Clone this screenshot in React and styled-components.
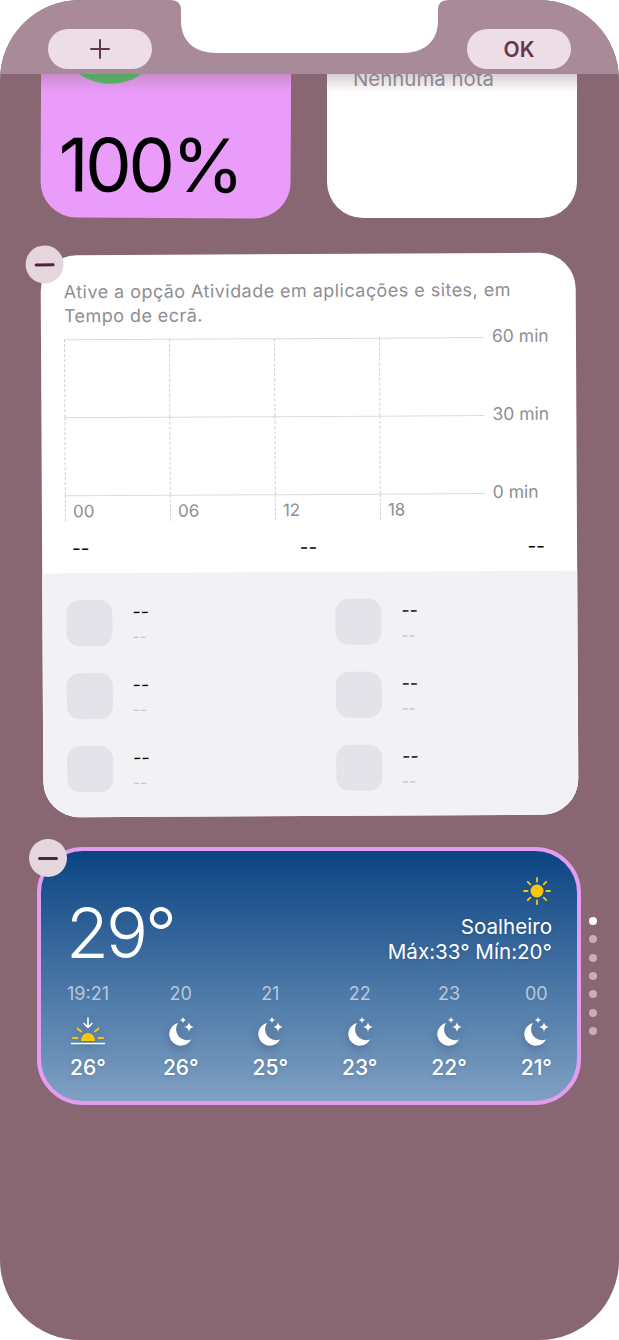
import styled, { createGlobalStyle } from "styled-components"

const GlobalStyle = createGlobalStyle`
    html, body {
        margin: 0;
        padding: 0;
        background: #fff;
    }
    * {
        box-sizing: border-box;
    }
`

const Screen = styled.div`
    position: relative;
    width: 619px;
    height: 1340px;
    display: flex;
    flex-direction: column;
    overflow: hidden;
    border-radius: 80px;
    background-color: #886672;
    font-family: Inter, "Noto Sans", "Liberation Sans", sans-serif;
`

const Header = styled.div`
    position: relative;
    z-index: 2;
    flex: 0 0 74px;
    display: flex;
    justify-content: space-between;
    padding: 29px 48px 0 48px;
    background-color: #a98a99;
`

const Notch = styled.svg`
    position: absolute;
    top: 0;
    left: 165px;
`

const HeaderButton = styled.div`
    width: 104px;
    height: 40px;
    display: flex;
    align-items: center;
    justify-content: center;
    border-radius: 20px;
    background-color: #ecdde6;
    color: #66364e;
    font-size: 21px;
    font-weight: 600;
`

const Content = styled.div`
    position: relative;
    flex: 1;
    display: flex;
    flex-direction: column;
    overflow: hidden;

    &::before {
        content: "";
        position: absolute;
        z-index: 1;
        top: 0;
        left: 0;
        right: 0;
        height: 18px;
        background: linear-gradient(rgba(136, 102, 114, 0.32), rgba(136, 102, 114, 0));
    }
`

const TopRow = styled.div`
    display: flex;
    gap: 36px;
    margin-top: -106px;
    padding-left: 41px;
`

const BatteryWidget = styled.div`
    width: 250px;
    height: 250px;
    display: flex;
    flex-direction: column;
    padding: 6px 0 0 14px;
    border-radius: 36px;
    background-color: #e99cf9;
    transform: rotate(0.3deg);
`

const BatteryRing = styled.div`
    width: 110px;
    height: 110px;
    border-radius: 50%;
    background-color: #45c25f;
`

const BatteryLevel = styled.div`
    margin: 36px 0 0 4px;
    font-size: 74px;
    line-height: 90px;
    letter-spacing: -3.5px;
    color: #000;
`

const NotesWidget = styled.div`
    width: 250px;
    height: 250px;
    padding: 99px 26px 0 26px;
    border-radius: 36px;
    background-color: #fff;
    color: #8e8e93;
    font-size: 20.4px;
    line-height: 24px;
`

const ScreenTimeWidget = styled.div`
    position: relative;
    width: 535px;
    height: 562px;
    margin: 36px 0 0 42px;
    display: flex;
    flex-direction: column;
    border-radius: 36px;
    background-color: #fff;
    transform: rotate(-0.3deg);
`

const MinusButton = styled.div`
    position: absolute;
    top: ${(props) => props.$top}px;
    left: ${(props) => props.$left}px;
    z-index: 1;
    width: 38px;
    height: 38px;
    display: flex;
    align-items: center;
    justify-content: center;
    border-radius: 50%;
    background-color: #e5d6de;

    &::after {
        content: "";
        width: 20px;
        height: 3px;
        border-radius: 2px;
        background-color: #552239;
    }
`

const UpperPanel = styled.div`
    height: 318px;
    padding: 25px 26px 0 23px;
`

const Message = styled.div`
    color: #8e8e93;
    font-size: 18px;
    line-height: 24px;
    letter-spacing: 0.45px;
    white-space: nowrap;
`

const ChartRow = styled.div`
    display: flex;
    margin-top: 11px;
`

const Plot = styled.div`
    width: 420px;
    display: grid;
    grid-template-columns: repeat(4, 105px);
    grid-template-rows: 78px 78px 26px;
`

const PlotCell = styled.div`
    border-top: 1px solid #dcdcde;
    border-left: 1px dashed #cfcfd2;
    padding: 5px 0 0 7px;
    color: #8e8e93;
    font-size: 17px;
    line-height: 20px;
`

const AxisLabels = styled.div`
    margin: -11px 0 0 8px;
    display: flex;
    flex-direction: column;
    gap: 58px;
`

const AxisLabel = styled.div`
    height: 20px;
    color: #8e8e93;
    font-size: 17.5px;
    line-height: 20px;
    white-space: nowrap;
`

const Totals = styled.div`
    display: flex;
    justify-content: space-between;
    margin: 16px 6px 0 7px;
    color: #000;
    font-size: 19px;
    line-height: 24px;
`

const LowerPanel = styled.div`
    flex: 1;
    display: grid;
    grid-template-columns: 269px 1fr;
    grid-auto-rows: 46px;
    row-gap: 27px;
    padding: 27px 26px 0 24px;
    border-radius: 0 0 36px 36px;
    background-color: #f2f1f6;
`

const AppRow = styled.div`
    display: flex;
    align-items: center;
    gap: 20px;
`

const AppIcon = styled.div`
    width: 46px;
    height: 46px;
    border-radius: 13px;
    background-color: #e4e3e9;
`

const AppText = styled.div`
    display: flex;
    flex-direction: column;
    gap: 6px;
    padding-top: 1px;
`

const AppName = styled.div`
    color: #000;
    font-size: 18px;
    line-height: 20px;
`

const AppTime = styled.div`
    color: #c7c7cc;
    font-size: 15px;
    line-height: 18px;
`

const WeatherRow = styled.div`
    display: flex;
    align-items: center;
    gap: 8px;
    margin: 31px 0 0 37px;
`

const WeatherWidget = styled.div`
    position: relative;
    width: 544px;
    height: 258px;
    display: flex;
    flex-direction: column;
    border: 4px solid #e49cf0;
    border-radius: 46px;
    background: linear-gradient(#0b4483, #7fa0c3);
    color: #fff;
`

const WeatherTop = styled.div`
    display: flex;
    justify-content: space-between;
    padding: 25px 25px 0 25px;
`

const CurrentTemp = styled.div`
    margin: 24px 0 -2px 0;
    font-size: 70px;
    font-weight: 300;
    line-height: 66px;
    letter-spacing: -3px;
`

const Summary = styled.div`
    display: flex;
    flex-direction: column;
    align-items: flex-end;
`

const SunIcon = styled.svg`
    margin: 0 0 8px 0;
`

const SummaryLine = styled.div`
    font-size: 20.6px;
    line-height: 25px;
    text-shadow: 0 1px 4px rgba(0, 0, 0, 0.15);
`

const Forecast = styled.div`
    display: flex;
    justify-content: space-between;
    margin-top: 20px;
    padding: 0 25px 0 26px;
`

const Hour = styled.div`
    display: flex;
    flex-direction: column;
    align-items: center;
`

const HourLabel = styled.div`
    color: rgba(255, 255, 255, 0.6);
    font-size: 18px;
    line-height: 20px;
    margin-bottom: 13px;
`

const HourIcon = styled.svg`
    filter: drop-shadow(0 3px 4px rgba(0, 0, 0, 0.2));
`

const HourTemp = styled.div`
    margin-top: 11px;
    font-size: 21px;
    font-weight: 500;
    line-height: 20px;
    text-shadow: 0 1px 4px rgba(0, 0, 0, 0.15);
`

const PageDots = styled.div`
    display: flex;
    flex-direction: column;
    gap: 10.4px;
`

const PageDot = styled.div`
    width: 8px;
    height: 8px;
    border-radius: 50%;
    background-color: ${(props) => (props.$active ? "#fff" : "#c4aeb8")};
`

const Moon = () => (
    <HourIcon width="30" height="30" viewBox="0 0 30 30">
        <path d="M12 6A11.5 11.5 0 1 0 25 22.5A11 11 0 0 1 12 6Z" fill="#fff" />
        <path d="M23 5Q23.5 9.5 28 10Q23.5 10.5 23 15Q22.5 10.5 18 10Q22.5 9.5 23 5Z" fill="#fff" />
        <path d="M17 0Q17.3 2.7 20 3Q17.3 3.3 17 6Q16.7 3.3 14 3Q16.7 2.7 17 0Z" fill="#fff" />
    </HourIcon>
)

const Sunset = () => (
    <HourIcon width="34" height="30" viewBox="0 0 34 30">
        <path d="M10 24A7 8 0 0 1 24 24Z" fill="#fcc70a" />
        <path
            d="M2 21H6.5M27.5 21H32M6.5 11.5L10 14.5M27.5 11.5L24 14.5"
            stroke="#fcc70a"
            strokeWidth="1.8"
            strokeLinecap="round"
            fill="none"
        />
        <path d="M0 26.5H34" stroke="#fff" strokeWidth="1.6" fill="none" />
        <path
            d="M17 1V10M13 6.5L17 10.5L21 6.5"
            stroke="#fff"
            strokeWidth="1.6"
            strokeLinecap="round"
            strokeLinejoin="round"
            fill="none"
        />
    </HourIcon>
)

const hours = [
    { label: "19:21", temp: "26°", sunset: true },
    { label: "20", temp: "26°" },
    { label: "21", temp: "25°" },
    { label: "22", temp: "23°" },
    { label: "23", temp: "22°" },
    { label: "00", temp: "21°" },
]

const ticks = ["00", "06", "12", "18"]

const App = () => {
    return (
        <Screen>
            <GlobalStyle />
            <Header>
                <Notch width="290" height="54" viewBox="0 0 290 54">
                    <path
                        d="M6 0Q16 0 16 10V20C16 42 30 53 52 53H237C259 53 273 42 273 20V10Q273 0 283 0Z"
                        fill="#fff"
                    />
                </Notch>
                <HeaderButton>
                    <svg width="20" height="20" viewBox="0 0 20 20">
                        <path d="M10 1V19M1 10H19" stroke="#66364e" strokeWidth="2" strokeLinecap="round" />
                    </svg>
                </HeaderButton>
                <HeaderButton>OK</HeaderButton>
            </Header>
            <Content>
                <TopRow>
                    <BatteryWidget>
                        <BatteryRing />
                        <BatteryLevel>100%</BatteryLevel>
                    </BatteryWidget>
                    <NotesWidget>Nenhuma nota</NotesWidget>
                </TopRow>

                <ScreenTimeWidget>
                    <MinusButton $top={-10} $left={-15} />
                    <UpperPanel>
                        <Message>
                            Ative a opção Atividade em aplicações e sites, em
                            <br />
                            Tempo de ecrã.
                        </Message>
                        <ChartRow>
                            <Plot>
                                {ticks.map((t) => <PlotCell key={"a" + t} />)}
                                {ticks.map((t) => <PlotCell key={"b" + t} />)}
                                {ticks.map((t) => <PlotCell key={t}>{t}</PlotCell>)}
                            </Plot>
                            <AxisLabels>
                                <AxisLabel>60 min</AxisLabel>
                                <AxisLabel>30 min</AxisLabel>
                                <AxisLabel>0 min</AxisLabel>
                            </AxisLabels>
                        </ChartRow>
                        <Totals>
                            <span>--</span>
                            <span>--</span>
                            <span>--</span>
                        </Totals>
                    </UpperPanel>
                    <LowerPanel>
                        {[0, 1, 2, 3, 4, 5].map((i) => (
                            <AppRow key={i}>
                                <AppIcon />
                                <AppText>
                                    <AppName>--</AppName>
                                    <AppTime>--</AppTime>
                                </AppText>
                            </AppRow>
                        ))}
                    </LowerPanel>
                </ScreenTimeWidget>

                <WeatherRow>
                    <WeatherWidget>
                        <MinusButton $top={-12} $left={-12} />
                        <WeatherTop>
                            <CurrentTemp>29°</CurrentTemp>
                            <Summary>
                                <SunIcon width="30" height="30" viewBox="0 0 30 30">
                                    <circle cx="15" cy="15" r="6.5" fill="#fcc70a" />
                                    <path
                                        d="M15 2V5.5M15 24.5V28M2 15H5.5M24.5 15H28M5.8 5.8L8.3 8.3M21.7 21.7L24.2 24.2M5.8 24.2L8.3 21.7M21.7 8.3L24.2 5.8"
                                        stroke="#fcc70a"
                                        strokeWidth="1.8"
                                        strokeLinecap="round"
                                    />
                                </SunIcon>
                                <SummaryLine>Soalheiro</SummaryLine>
                                <SummaryLine>Máx:33° Mín:20°</SummaryLine>
                            </Summary>
                        </WeatherTop>
                        <Forecast>
                            {hours.map((h) => (
                                <Hour key={h.label}>
                                    <HourLabel>{h.label}</HourLabel>
                                    {h.sunset ? <Sunset /> : <Moon />}
                                    <HourTemp>{h.temp}</HourTemp>
                                </Hour>
                            ))}
                        </Forecast>
                    </WeatherWidget>
                    <PageDots>
                        {[0, 1, 2, 3, 4, 5, 6].map((i) => (
                            <PageDot key={i} $active={i === 0} />
                        ))}
                    </PageDots>
                </WeatherRow>
            </Content>
        </Screen>
    )
}

export default App
